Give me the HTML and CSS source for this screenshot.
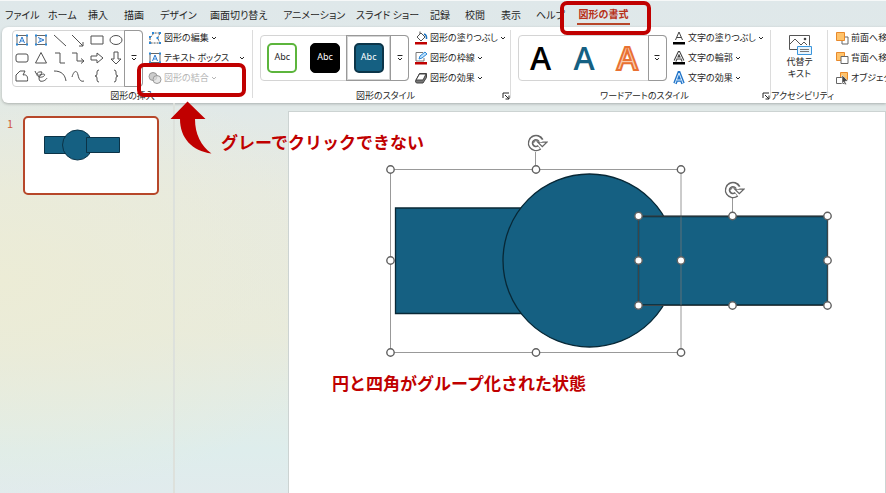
FILE: index.html
```html
<!DOCTYPE html>
<html lang="ja">
<head>
<meta charset="utf-8">
<title>図形の書式</title>
<link rel="stylesheet" href="styles.css">
</head>
<body>
<svg class="defs" aria-hidden="true">
  <symbol id="chev" viewBox="0 0 6 6"><path d="M1 2l2 2 2-2" fill="none" stroke="currentColor"/></symbol>
  <symbol id="more" viewBox="0 0 8 8"><path d="M1.500 1.500h5M2 4l2 2 2-2" fill="none" stroke="currentColor"/></symbol>
  <symbol id="launch" viewBox="0 0 8 8"><path d="M1 6V1h6M3 3l4 4M7 3.500V7H3.500" fill="none" stroke="currentColor"/></symbol>
  <symbol id="rotate" viewBox="-10 -10 22 20">
    <path d="M5 -2.500A5.500 5.500 0 1 0 3.500 4.300" fill="none" stroke="#666" stroke-width="5.600"/>
    <path d="M1.800 -0.800H10.800L6.300 3.700Z" fill="#fff" stroke="#666" stroke-width="1.300"/>
    <path d="M5.300 -1A5.500 5.500 0 1 0 3.100 4.600" fill="none" stroke="#fff" stroke-width="2.600"/>
    <path d="M-2.300 0A2.500 2.500 0 0 1 2.200 -1.300" fill="none" stroke="#666"/>
  </symbol>
</svg>

<nav class="tabs">
  <button>ファイル</button><button>ホーム</button><button>挿入</button><button>描画</button><button>デザイン</button><button>画面切り替え</button><button>アニメーション</button><button>スライド ショー</button><button>記録</button><button>校閲</button><button>表示</button><button>ヘルプ</button><button class="active">図形の書式</button>
</nav>

<section class="ribbon">
  <div class="group">
    <div class="body">
      <div class="gallery tall">
        <div class="shapes">
          <svg viewBox="0 0 14 14"><path d="M2 2.500h10v9H2z" fill="#fff" stroke="#666"/><path d="M4.500 10L7 4l2.500 6M5.500 8h3" class="blue"/><path d="M1 1.500h2v2H1zM11 1.500h2v2h-2zM1 10.500h2v2H1zM11 10.500h2v2h-2z" class="grip"/></svg>
          <svg viewBox="0 0 14 14"><path d="M2 2.500h10v9H2z" fill="#fff" stroke="#666"/><path d="M4 4.500L10 7 4 9.500M6 5.500v3" class="blue"/><path d="M1 1.500h2v2H1zM11 1.500h2v2h-2zM1 10.500h2v2H1zM11 10.500h2v2h-2z" class="grip"/></svg>
          <svg viewBox="0 0 14 14"><path d="M1 2l12 11"/></svg>
          <svg viewBox="0 0 14 14"><path d="M1 2l11 11M12 9v4H8"/></svg>
          <svg viewBox="0 0 14 14"><path d="M1 3h12v8H1z"/></svg>
          <svg viewBox="0 0 14 14"><ellipse cx="7" cy="7" rx="6" ry="4.500"/></svg>
          <svg viewBox="0 0 14 14"><rect x="1" y="3" width="12" height="8" rx="2"/></svg>
          <svg viewBox="0 0 14 14"><path d="M7 1.500L12.500 12h-11z"/></svg>
          <svg viewBox="0 0 14 14"><path d="M2 2h5v10h5"/></svg>
          <svg viewBox="0 0 14 14"><path d="M1 2h5v8h7M10 7.500l3 2.500-3 2.500"/></svg>
          <svg viewBox="0 0 14 14"><path d="M1 5h6V2l6 5-6 5V9H1z"/></svg>
          <svg viewBox="0 0 14 14"><path d="M5 1v7H2l5 5 5-5H9V1z"/></svg>
          <svg viewBox="0 0 14 14"><path d="M1 12V6l4-4h5L8 6c4-1 5 2 4.500 6z"/></svg>
          <svg viewBox="0 0 14 14"><path d="M1 2c2 6 6 5 7 1-5-1-7 3-3 5 4 1 7-2 5-3-5 0-6 5-4 7 3 1 6-1 7-3"/></svg>
          <svg viewBox="0 0 14 14"><path d="M1 2c8 0 11 4 12 10"/></svg>
          <svg viewBox="0 0 14 14"><path d="M1 8c2-7 5-7 6-2s3 7 6 6"/></svg>
          <svg viewBox="0 0 14 14"><path d="M9 1Q7 1 7 3v2q0 2-2 2 2 0 2 2v2q0 2 2 2"/></svg>
          <svg viewBox="0 0 14 14"><path d="M5 1q2 0 2 2v2q0 2 2 2-2 0-2 2v2q0 2-2 2"/></svg>
        </div>
        <button class="expand" aria-label="その他の図形"><svg><use href="#more"/></svg></button>
      </div>
      <div class="commands">
        <button><svg class="ic" viewBox="0 0 14 14"><path d="M2 12V7l4-5h6L9.500 7 12 12z" fill="none" stroke="#555" stroke-dasharray="2 1"/><path d="M1 11h2v2H1zM11 11h2v2h-2zM4 1h2v2H4zM11 1h2v2h-2zM1 5h2v2H1zM8.500 6h2v2h-2z" fill="#2b88d8"/></svg>図形の編集<svg class="ch"><use href="#chev"/></svg></button>
        <button><svg class="ic" viewBox="0 0 14 14"><path d="M2 2.500h10v9H2z" fill="#fff" stroke="#666"/><path d="M4.500 10L7 4l2.500 6M5.500 8h3" fill="none" stroke="#2b7cd3"/><path d="M1 1.500h2v2H1zM11 1.500h2v2h-2zM1 10.500h2v2H1zM11 10.500h2v2h-2z" fill="#2b88d8"/></svg>テキスト ボックス<svg class="ch far"><use href="#chev"/></svg></button>
        <button disabled><svg class="ic" viewBox="0 0 14 14"><circle cx="5" cy="5.500" r="4" fill="#ccc" stroke="#999"/><circle cx="9" cy="8.500" r="4" fill="#ddd" fill-opacity=".7" stroke="#999"/></svg>図形の結合<svg class="ch"><use href="#chev"/></svg></button>
      </div>
    </div>
    <div class="label">図形の挿入</div>
  </div>

  <div class="group">
    <div class="body">
      <div class="gallery">
        <button class="cell"><span class="swatch green">Abc</span></button>
        <button class="cell"><span class="swatch black">Abc</span></button>
        <button class="cell selected"><span class="swatch teal">Abc</span></button>
        <button class="expand" aria-label="その他のスタイル"><svg><use href="#more"/></svg></button>
      </div>
      <div class="commands">
        <button><svg class="ic" viewBox="0 0 14 14"><path d="M3 6l4-4 4 4-4 4zM6 3V.500" fill="#fff" stroke="#555"/><path d="M10 3q3 1 2.500 5" fill="none" stroke="#1e73be" stroke-width="1.500"/><path d="M1 11h12v2.500H1z" fill="#c00000"/></svg>図形の塗りつぶし<svg class="ch"><use href="#chev"/></svg></button>
        <button><svg class="ic" viewBox="0 0 14 14"><path d="M9 1.500H2V10h8V7" fill="none" stroke="#777"/><path d="M5 8l1-3 5-4 2 2-5 4z" fill="#bfe0fa" stroke="#2b88d8"/><path d="M1 11h12v2.500H1z" fill="#c00000"/></svg>図形の枠線<svg class="ch"><use href="#chev"/></svg></button>
        <button><svg class="ic" viewBox="0 0 14 14"><path d="M1.500 10l4-7.500h7v4L9 12H3q-1.500 0-1.500-2z" fill="#777" stroke="#444"/><path d="M2 9l3.500-6h6.500L9 9z" fill="#fff" stroke="#444"/></svg>図形の効果<svg class="ch"><use href="#chev"/></svg></button>
      </div>
    </div>
    <div class="label">図形のスタイル</div>
    <button class="launcher" aria-label="図形の書式設定"><svg><use href="#launch"/></svg></button>
  </div>

  <div class="group">
    <div class="body">
      <div class="gallery">
        <button class="cell art">A</button>
        <button class="cell art blueart">A</button>
        <button class="cell art orangeart">A</button>
        <button class="expand" aria-label="その他のワードアート"><svg><use href="#more"/></svg></button>
      </div>
      <div class="commands">
        <button><svg class="ic" viewBox="0 0 14 14"><path d="M3.500 9L7 1l3.500 8M5 6.500h4" fill="none" stroke="#444"/><path d="M1 11h12v2.500H1z"/></svg>文字の塗りつぶし<svg class="ch"><use href="#chev"/></svg></button>
        <button><svg class="ic" viewBox="0 0 14 14"><path d="M3 10L7 1.500 11 10M5 7h4" fill="none" stroke="#444" stroke-width="3"/><path d="M3 10L7 1.500 11 10M5 7h4" fill="none" stroke="#fff"/><path d="M1 11h12v2.500H1z"/></svg>文字の輪郭<svg class="ch"><use href="#chev"/></svg></button>
        <button><svg class="ic" viewBox="0 0 14 14"><path d="M3 12.500L7 2l4 10.500M5 9h4" fill="none" stroke="#2375c8" stroke-width="3.600"/><path d="M3 12.500L7 2l4 10.500M5 9h4" fill="none" stroke="#dff0ff"/></svg>文字の効果<svg class="ch"><use href="#chev"/></svg></button>
      </div>
    </div>
    <div class="label">ワードアートのスタイル</div>
    <button class="launcher" aria-label="文字の効果の設定"><svg><use href="#launch"/></svg></button>
  </div>

  <div class="group access">
    <button class="alt">
      <svg viewBox="0 0 24 22"><path d="M14 15.500H1.500v-14h20v10" fill="#fff" stroke="#555"/><path d="M2 10l5-5 6 6 3-3 3 3" fill="none" stroke="#555"/><circle cx="17" cy="5" r="1.300" fill="#444"/><path d="M9.500 12.500h14v8h-14z" fill="#eaf5fd" stroke="#3a96dd"/><path d="M12 15.500h9M12 17.500h9" stroke="#777"/></svg>
      <span>代替テ<br>キスト</span>
    </button>
    <div class="label">アクセシビリティ</div>
  </div>

  <div class="group">
    <div class="body">
      <div class="commands">
        <button><svg class="ic" viewBox="0 0 14 14"><path d="M7 6h6v7H7z" fill="#fff" stroke="#666"/><path d="M1.500 1.500h8v8h-8z" fill="#ffc36b" stroke="#e8892b"/></svg>前面へ移動</button>
        <button><svg class="ic" viewBox="0 0 14 14"><path d="M1.500 1.500h8v8h-8z" fill="#ffc36b" stroke="#e8892b"/><path d="M6 5.500h7v7H6z" fill="#fff" stroke="#666"/></svg>背面へ移動</button>
        <button><svg class="ic" viewBox="0 0 14 14"><path d="M5.500 1.500h7v7h-7z" fill="#ffc36b" stroke="#e8892b"/><path d="M1.500 6.500h8v6h-8z" fill="#fff" stroke="#666"/><path d="M7 4l6 6-3 .300 1.500 3-1.500.500-1.300-3L7 13z" fill="#444" stroke="#fff" stroke-width=".5"/></svg>オブジェクトの選択</button>
      </div>
    </div>
  </div>
</section>

<main class="work">
  <aside class="slides">
    <span class="num">1</span>
    <button class="thumb" aria-label="スライド 1">
      <svg viewBox="25 118 132 75"><g fill="#156082" stroke="#0b3347"><path d="M44.500 136.500h33v17h-33z"/><circle cx="77.500" cy="145" r="15"/><path d="M86.500 137.500h33v15h-33z"/></g></svg>
    </button>
  </aside>
  <div class="canvas">
    <svg class="drawing" viewBox="289 112 596 381" role="img" aria-label="円と四角">
      <g fill="#156082" stroke="#082836" stroke-width="1.300">
        <path d="M395.500 208h150v105.500h-150z"/>
        <circle cx="589.500" cy="260.500" r="86.500"/>
        <path d="M638.500 216.500h189v88.500h-189z"/>
      </g>
      <g fill="none" stroke="#777" stroke-opacity=".75">
        <path d="M390.500 169.500h290.500v183H390.500zM535.500 152v17M732.500 198v17"/>
      </g>
      <path d="M638.500 216h189v89.500h-189z" fill="none" stroke="#3c4548"/>
      <g fill="#fff" stroke="#606060" stroke-width="1.400">
        <circle cx="390.500" cy="169.500" r="3.700"/><circle cx="536" cy="169.500" r="3.700"/><circle cx="681" cy="169.500" r="3.700"/>
        <circle cx="390.500" cy="260.500" r="3.700"/><circle cx="681" cy="260.500" r="3.700"/>
        <circle cx="390.500" cy="352.500" r="3.700"/><circle cx="536" cy="352.500" r="3.700"/><circle cx="681" cy="352.500" r="3.700"/>
        <circle cx="638.500" cy="216" r="3.700"/><circle cx="732.500" cy="216" r="3.700"/><circle cx="827.500" cy="216" r="3.700"/>
        <circle cx="638.500" cy="260.500" r="3.700"/><circle cx="827.500" cy="260.500" r="3.700"/>
        <circle cx="638.500" cy="305.500" r="3.700"/><circle cx="732.500" cy="305.500" r="3.700"/><circle cx="827.500" cy="305.500" r="3.700"/>
      </g>
      <use href="#rotate" x="526" y="133" width="22" height="20"/>
      <use href="#rotate" x="723" y="180" width="22" height="20"/>
    </svg>
  </div>
</main>

<div class="mark mark-merge"></div>
<div class="mark mark-tab"></div>
<svg class="pointer" viewBox="170 101 43 53" aria-hidden="true"><path d="M187.500 101.500L205.500 119H195C195 134 201 146 211.500 153.500C192 151 180 138 180 119H170.500Z" fill="#c00000"/></svg>
<p class="note note-gray">グレーでクリックできない</p>
<p class="note note-group">円と四角がグループ化された状態</p>
</body>
</html>
```

FILE: styles.css
```css
* { box-sizing: border-box; }

body {
  margin: 0;
  height: 100vh;
  position: relative;
  display: flex;
  flex-direction: column;
  overflow: hidden;
  font: 10px/14px "Noto Sans CJK JP", sans-serif;
  font-feature-settings: "palt";
  color: #262626;
  background:
    radial-gradient(ellipse 360px 220px at 0 280px, #ececd6, rgba(236, 236, 214, 0)),
    linear-gradient(#dfe8ea 0, #e1e9e8 110px, #e7eae1 190px, #e8ebdd 330px, #e3ece5 390px, #deedec 450px, #e1ebed);
}

button {
  margin: 0;
  padding: 0;
  border: 0;
  background: none;
  font: inherit;
  font-feature-settings: inherit;
  color: inherit;
  white-space: nowrap;
}

.defs { position: absolute; width: 0; height: 0; }

.tabs {
  display: grid;
  grid-template-columns: 43px 40px 36px 36px 50px 73px 73px 74px 35px 36px 35px 41px 53px;
  padding: 2px 0 0 5px;
  height: 27px;
  border-top: 1px solid #f6f8f8;
}
.tabs button { text-align: left; height: 24px; }
.tabs .active {
  align-self: start;
  color: #b7311a;
  font-weight: 700;
  text-align: center;
  background: linear-gradient(#b7472a, #b7472a) bottom / 100% 2px no-repeat;
  height: 22px;
}

.ribbon {
  display: grid;
  grid-template-columns: 251px 258px 260px 57px 1fr;
  height: 76px;
  margin-left: 2px;
  background: #fff;
  border-radius: 6px 0 0 6px;
  box-shadow: 0 1px 3px rgba(0, 0, 0, .25);
  overflow: hidden;
  font-size: 9px;
}
.group {
  position: relative;
  min-width: 0;
  padding: 1px 0 0 7px;
}
.group:first-child { padding-left: 10px; }
.group.access { padding-left: 0; }
.group::after {
  content: "";
  position: absolute;
  right: 0;
  top: 3px;
  bottom: 5px;
  width: 1px;
  background: #dcdcdc;
}
.group:last-child::after { display: none; }
.body {
  display: flex;
  align-items: center;
  gap: 5px;
  height: 60px;
}
.label { text-align: center; height: 15px; line-height: 15px; white-space: nowrap; }
.launcher { position: absolute; right: 1px; bottom: 3px; width: 8px; height: 8px; }
.launcher svg { display: block; width: 8px; height: 8px; }

.gallery {
  flex: none;
  display: flex;
  width: 149px;
  height: 46px;
  border: 1px solid #d4d4d4;
  border-radius: 4px;
}
.gallery.tall { width: 131px; height: 57px; }
.shapes {
  flex: 1;
  display: grid;
  grid-template-columns: repeat(6, 1fr);
  place-items: center;
}
.shapes svg { width: 14px; height: 14px; fill: none; stroke: #505050; }
.shapes .blue { stroke: #2b7cd3; }
.shapes .grip { fill: #2b88d8; stroke: none; }
.expand {
  width: 19px;
  margin: -1px;
  border: 1px solid #999;
  border-radius: 0 4px 4px 0;
  display: grid;
  place-items: center;
}
.expand svg { width: 8px; height: 8px; }
.cell { flex: 1; display: grid; place-items: center; }
.cell.selected { border: 1px solid #999; outline: 1px solid #d4d4d4; outline-offset: -2px; margin: -1px 0; }
.swatch {
  width: 30px;
  height: 30px;
  border-radius: 5px;
  border: 1px solid #000;
  font: 9px/26px "Noto Sans", sans-serif;
}
.green { border: 2px solid #5cb53c; background: #fff; line-height: 24px; }
.black { background: #000; color: #fff; }
.teal { border: 2px solid #0c3549; background: #156082; color: #fff; line-height: 24px; }
.art { font: 600 32px/44px "Open Sans", sans-serif; color: #000; }
.blueart { color: #156082; }
.orangeart { color: #f8cbb0; -webkit-text-stroke: 2px #e97132; }

.commands {
  display: grid;
  grid-template-rows: repeat(3, 1fr);
  height: 60px;
}
.commands button { display: flex; align-items: center; gap: 2px; }
.commands button:disabled { color: #b4b4b4; }
.ic { width: 14px; height: 14px; flex: none; }
.ch { width: 6px; height: 6px; flex: none; }
.ch.far { margin-left: 8px; }

.alt {
  width: 43px;
  height: 60px;
  margin: 0 auto;
  padding-top: 6px;
  display: flex;
  flex-direction: column;
  align-items: center;
  line-height: 12px;
}
.alt svg { width: 24px; height: 22px; flex: none; }

.work { flex: 1; min-height: 0; display: flex; }
.slides {
  width: 175px;
  display: flex;
  align-items: flex-start;
  gap: 9px;
  padding: 13px 14px 0 7px;
  border-right: 2px solid #dde1dc;
}
.num { color: #d0593a; width: 7px; line-height: 14px; font-size: 11px; }
.thumb {
  flex: 1;
  border: 2px solid #b7472a;
  border-radius: 5px;
  background: #fff;
  overflow: hidden;
}
.thumb svg { display: block; width: 100%; }
.canvas {
  flex: 1;
  margin: 8px 0 0 113px;
  border: 1px solid #ccd3d2;
  border-bottom: 0;
  background: #fff;
  overflow: hidden;
}
.drawing { display: block; width: 100%; }

/* Annotations drawn over the window */
.mark { position: absolute; border: 4px solid #c00000; border-radius: 7px; }
.mark-merge { left: 137px; top: 63px; width: 109px; height: 34px; }
.mark-tab { left: 560px; top: 1px; width: 91px; height: 34px; }
.pointer { position: absolute; left: 170px; top: 101px; width: 43px; height: 53px; }
.note {
  position: absolute;
  margin: 0;
  font-size: 17px;
  line-height: 24px;
  font-weight: 700;
  font-feature-settings: normal;
  color: #c00000;
  white-space: nowrap;
}
.note-gray { left: 221px; top: 130px; }
.note-group { left: 332px; top: 371px; }
```
